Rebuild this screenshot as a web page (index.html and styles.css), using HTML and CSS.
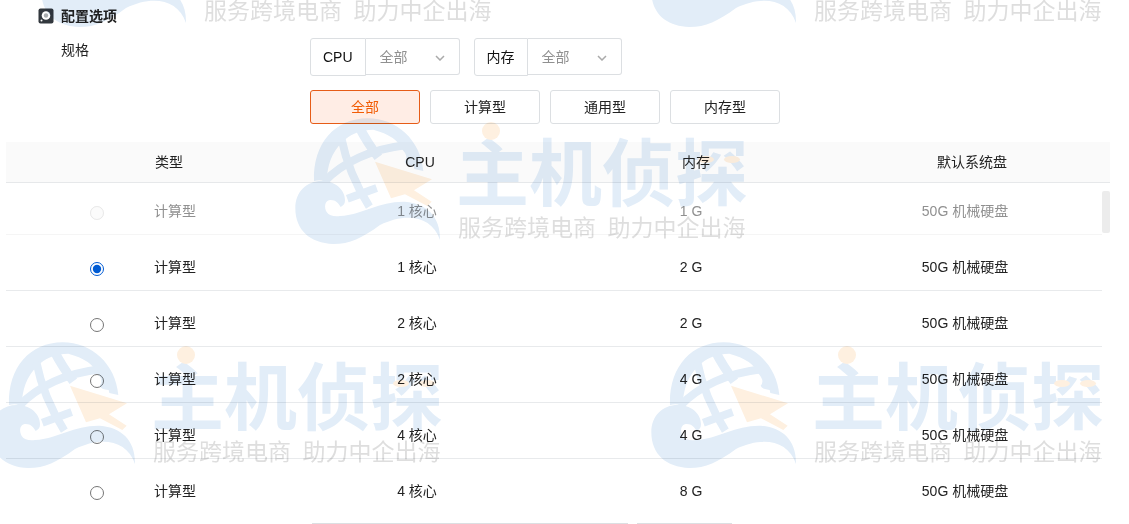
FILE: index.html
```
<!DOCTYPE html>
<html lang="zh-CN">
<head>
    <meta charset="UTF-8">
    <title>配置选项</title>
    <link rel="stylesheet" href="styles.css">
</head>
<body>
    <svg width="0" height="0" class="defs">
        <symbol id="mark" viewBox="0 0 480 420">
            <g fill="#e2edf8">
                <path d="M72 213C68 100 136 25 233 25C320 25 392 90 400 183L373 177L371 168Q348 166 344 155Q358 140 335 116Q320 78 250 59Q190 60 155 98Q112 140 110 215Q92 207 72 213Z"/>
                <path d="M450 390C425 315 345 308 270 345C215 385 180 402 130 402C60 400 16 360 16 295C16 245 50 213 95 213C135 213 165 238 165 271C165 282 160 287 152 291C146 280 137 269 120 270C104 272 102 292 110 306C117 317 132 320 150 318C220 313 270 273 345 275C410 280 452 320 450 390Z"/>
            </g>
            <g fill="none" stroke="#e2edf8" stroke-width="24">
                <path d="M102 216Q190 125 345 106"/>
                <path d="M154 84Q175 190 238 290"/>
                <path stroke-width="28" d="M208 52Q230 95 265 142"/>
                <path d="M172 266L260 234"/>
            </g>
            <path fill="#fef0e0" d="M255 155L426 208L372 241L425 275L412 288L345 253L303 265Z"/>
        </symbol>
    </svg>

    <main>
        <h2 class="section-title">
            <svg width="16" height="16" viewBox="0 0 16 16">
                <rect x="0.5" y="0.5" width="15" height="15" rx="2" fill="#32383e"/>
                <circle cx="8" cy="7.5" r="4.3" fill="#fff"/>
                <circle cx="8" cy="7.5" r="2.2" fill="#a9adb0"/>
                <circle cx="3.5" cy="12.5" r="1" fill="#fff"/>
            </svg>
            配置选项
        </h2>

        <div class="spec">
            <div class="spec-label">规格</div>
            <div class="spec-content">
                <div class="filters">
                    <div class="filter">
                        <label for="cpu">CPU</label>
                        <div class="select">
                            <select id="cpu"><option>全部</option></select>
                            <svg width="10" height="6" viewBox="0 0 10 6"><path d="M1 1L5 5L9 1"/></svg>
                        </div>
                    </div>
                    <div class="filter">
                        <label for="memory">内存</label>
                        <div class="select">
                            <select id="memory"><option>全部</option></select>
                            <svg width="10" height="6" viewBox="0 0 10 6"><path d="M1 1L5 5L9 1"/></svg>
                        </div>
                    </div>
                </div>
                <div class="types">
                    <button class="active">全部</button>
                    <button>计算型</button>
                    <button>通用型</button>
                    <button>内存型</button>
                </div>
            </div>
        </div>

        <div class="table-wrap">
            <table>
                <thead>
                    <tr><th></th><th class="type">类型</th><th>CPU</th><th>内存</th><th>默认系统盘</th></tr>
                </thead>
                <tbody>
                    <tr class="disabled">
                        <td class="pick"><input type="radio" name="spec" id="s1" disabled></td>
                        <td class="type"><label for="s1">计算型</label></td>
                        <td>1 核心</td><td>1 G</td><td>50G 机械硬盘</td>
                    </tr>
                    <tr>
                        <td class="pick"><input type="radio" name="spec" id="s2" checked></td>
                        <td class="type"><label for="s2">计算型</label></td>
                        <td>1 核心</td><td>2 G</td><td>50G 机械硬盘</td>
                    </tr>
                    <tr>
                        <td class="pick"><input type="radio" name="spec" id="s3"></td>
                        <td class="type"><label for="s3">计算型</label></td>
                        <td>2 核心</td><td>2 G</td><td>50G 机械硬盘</td>
                    </tr>
                    <tr>
                        <td class="pick"><input type="radio" name="spec" id="s4"></td>
                        <td class="type"><label for="s4">计算型</label></td>
                        <td>2 核心</td><td>4 G</td><td>50G 机械硬盘</td>
                    </tr>
                    <tr>
                        <td class="pick"><input type="radio" name="spec" id="s5"></td>
                        <td class="type"><label for="s5">计算型</label></td>
                        <td>4 核心</td><td>4 G</td><td>50G 机械硬盘</td>
                    </tr>
                    <tr>
                        <td class="pick"><input type="radio" name="spec" id="s6"></td>
                        <td class="type"><label for="s6">计算型</label></td>
                        <td>4 核心</td><td>8 G</td><td>50G 机械硬盘</td>
                    </tr>
                </tbody>
            </table>
            <div class="scroll-thumb"></div>
        </div>

        <div class="next-fields">
            <div class="field"></div>
            <div class="field small"></div>
        </div>
    </main>

    <div class="watermarks" aria-hidden="true">
        <div class="watermark wm-1">
            <svg class="mark"><use href="#mark"/></svg>
            <div class="brand">主机侦探</div>
            <div class="slogan">服务跨境电商&ensp;助力中企出海</div>
        </div>
        <div class="watermark wm-2">
            <svg class="mark"><use href="#mark"/></svg>
            <div class="brand">主机侦探</div>
            <div class="slogan">服务跨境电商&ensp;助力中企出海</div>
        </div>
        <div class="watermark wm-3">
            <svg class="mark"><use href="#mark"/></svg>
            <div class="brand">主机侦探</div>
            <div class="slogan">服务跨境电商&ensp;助力中企出海</div>
        </div>
        <div class="watermark wm-4">
            <svg class="mark"><use href="#mark"/></svg>
            <div class="brand">主机侦探</div>
            <div class="slogan">服务跨境电商&ensp;助力中企出海</div>
        </div>
        <div class="watermark wm-5">
            <svg class="mark"><use href="#mark"/></svg>
            <div class="brand">主机侦探</div>
            <div class="slogan">服务跨境电商&ensp;助力中企出海</div>
        </div>
    </div>
</body>
</html>
```

FILE: styles.css
```
* {
    box-sizing: border-box;
}

body {
    margin: 0;
    position: relative;
    overflow: hidden;
    background: #fff;
    color: #222;
    font: 14px/20px "Liberation Sans", "Noto Sans CJK SC", sans-serif;
}

.defs {
    position: absolute;
}

main {
    padding: 6px 19px 0 6px;
}

.section-title {
    display: flex;
    align-items: center;
    gap: 7px;
    height: 20px;
    margin: 0 0 12px;
    padding-left: 32px;
    font-size: 14px;
    font-weight: bold;
}

.spec {
    display: flex;
    padding-left: 55px;
}

.spec-label {
    width: 249px;
    padding-top: 2px;
}

.filters {
    display: flex;
    gap: 14px;
    margin-bottom: 14px;
}

.filter {
    display: flex;
    height: 38px;
}

.filter label {
    padding: 8px 12px;
    border: 1px solid #dcdfe2;
    border-radius: 3px 0 0 3px;
    color: #111;
}

.select {
    position: relative;
    height: 37px;
}

.select select {
    appearance: none;
    width: 94px;
    height: 37px;
    padding: 0 14px;
    border: 1px solid #dcdfe2;
    border-left: 0;
    border-radius: 0 3px 3px 0;
    background: #fff;
    color: #909090;
    font: inherit;
}

.select svg {
    position: absolute;
    right: 15px;
    top: 17px;
    fill: none;
    stroke: #aaa;
    stroke-width: 1.5;
    pointer-events: none;
}

.types {
    display: flex;
    gap: 10px;
}

.types button {
    width: 110px;
    height: 34px;
    padding: 0;
    border: 1px solid #dcdfe2;
    border-radius: 3px;
    background: #fff;
    color: #222;
    font: inherit;
    cursor: pointer;
}

.types button.active {
    border-color: #e65c17;
    background: #ffede5;
    color: #f25c05;
}

/* table */
.table-wrap {
    position: relative;
    margin-top: 18px;
}

table,
thead,
tbody {
    display: block;
}

tr {
    display: grid;
    grid-template-columns: 27fr 23fr 50fr 50fr 50fr;
    align-items: center;
}

th,
td {
    padding: 0;
    font-weight: normal;
    text-align: center;
}

th.type,
td.type {
    text-align: left;
}

thead tr {
    height: 41px;
    background: #fafafa;
    border-bottom: 1px solid #e6e8ea;
}

tbody {
    padding-right: 8px;
}

tbody tr {
    height: 56px;
    padding-top: 8px;
    border-bottom: 1px solid #e8eaec;
}

tbody tr:first-child {
    height: 52px;
    padding-top: 4px;
}

tbody tr:last-child {
    border-bottom-color: transparent;
}

tbody tr.disabled {
    color: #909090;
    border-bottom-color: #f5f5f5;
}

.pick {
    display: flex;
    justify-content: flex-end;
    padding: 4px 50px 0 0;
}

.pick input {
    width: 14px;
    height: 14px;
    margin: 0;
    accent-color: #005bd3;
}

.pick input:disabled {
    opacity: 0.5;
}

.scroll-thumb {
    position: absolute;
    right: 0;
    top: 49px;
    width: 8px;
    height: 42px;
    border-radius: 2px;
    background: #ececec;
}

.next-fields {
    display: flex;
    gap: 9px;
    margin-top: 8px;
    padding-left: 306px;
}

.field {
    width: 316px;
    border-top: 1px solid #dcdfe2;
}

.field.small {
    width: 95px;
}

/* watermark tiles */
.watermarks {
    position: absolute;
    inset: 0;
    overflow: hidden;
    pointer-events: none;
    mix-blend-mode: multiply;
}

.watermark {
    position: absolute;
    width: 460px;
    height: 140px;
    white-space: nowrap;
    font-family: "Noto Sans CJK SC", sans-serif;
}

.mark {
    position: absolute;
    left: 0;
    top: 0;
    width: 160px;
    height: 140px;
}

.brand {
    position: absolute;
    left: 166px;
    top: 20px;
    color: #e2edf8;
    font-size: 73px;
    font-weight: bold;
    line-height: 76px;
}

/* orange dot on top of the first character */
.brand::before {
    content: "";
    position: absolute;
    left: 26px;
    top: -8px;
    width: 18px;
    height: 18px;
    border-radius: 50%;
    background: #fef0e0;
}

/* the two orange dashes inside the last character */
.brand::after {
    content: "";
    position: absolute;
    left: 242px;
    top: 26px;
    width: 16px;
    height: 7px;
    border-radius: 50%;
    background: #fef0e0;
    box-shadow: 26px 0 #fef0e0;
}

.slogan {
    position: absolute;
    left: 168px;
    top: 103px;
    color: #dedede;
    font-size: 23px;
    line-height: 26px;
}

.wm-1 {
    left: 36px;
    top: -107px;
}

.wm-2 {
    left: 646px;
    top: -107px;
}

.wm-3 {
    left: 290px;
    top: 110px;
}

.wm-4 {
    left: -15px;
    top: 334px;
}

.wm-5 {
    left: 646px;
    top: 334px;
}
```
